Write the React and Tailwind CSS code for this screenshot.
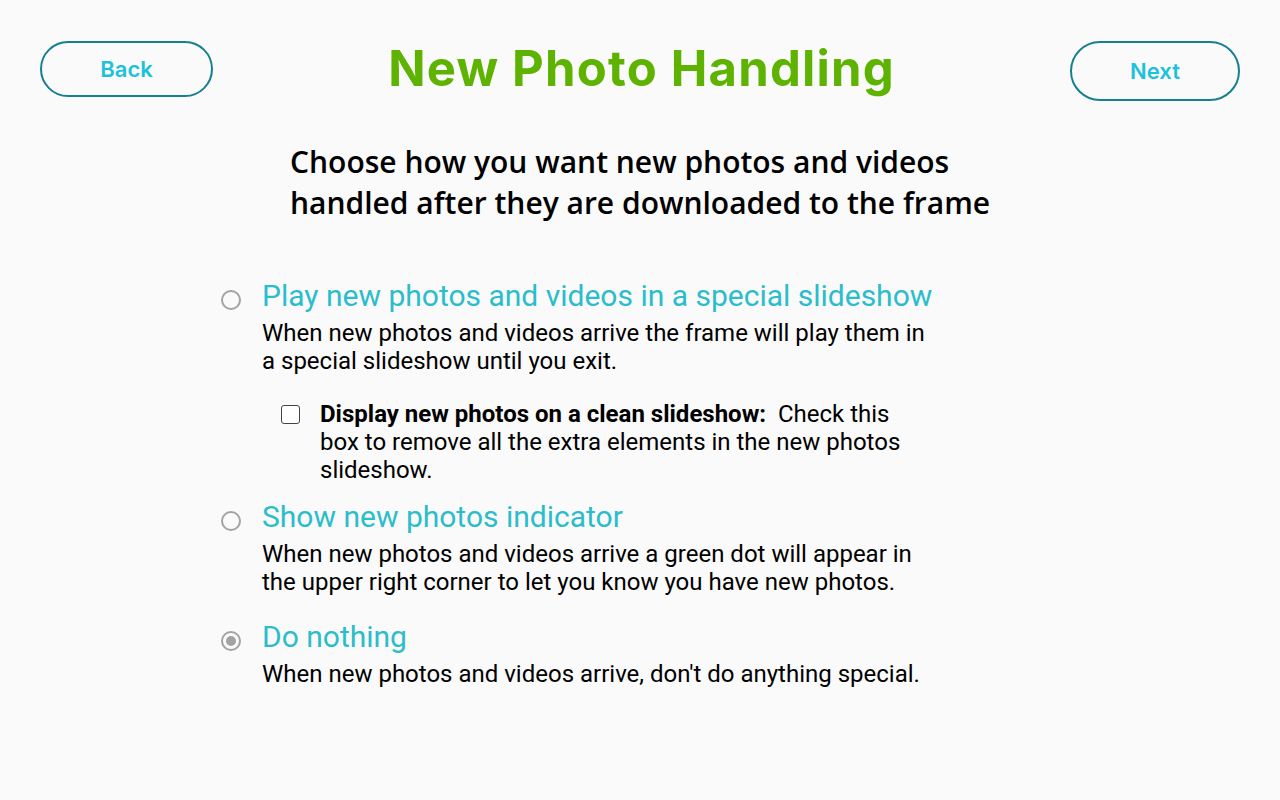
import { useState } from 'react';

const options = [
  {
    id: 'slideshow',
    title: 'Play new photos and videos in a special slideshow',
    text: 'When new photos and videos arrive the frame will play them in a special slideshow until you exit.',
  },
  {
    id: 'indicator',
    title: 'Show new photos indicator',
    text: 'When new photos and videos arrive a green dot will appear in the upper right corner to let you know you have new photos.',
  },
  {
    id: 'nothing',
    title: 'Do nothing',
    text: "When new photos and videos arrive, don't do anything special.",
  },
];

function Radio({ checked }) {
  return (
    <span className="mt-[14px] flex h-[20px] w-[20px] shrink-0 items-center justify-center rounded-full border-2 border-[#a3a3a3]">
      {checked && <span className="h-[10px] w-[10px] rounded-full bg-[#a3a3a3]" />}
    </span>
  );
}

export default function App() {
  const [selected, setSelected] = useState('nothing');
  const [clean, setClean] = useState(false);

  return (
    <div className="min-h-screen bg-[#fafafa] font-['Roboto',sans-serif] text-black">
      {/* Header */}
      <div className="flex items-start justify-between px-[40px] pt-[41px]">
        <button className="h-[56px] w-[173px] rounded-full border-2 border-[#17808f] font-['Inter',sans-serif] text-[22px] font-semibold text-[#1dc2da]">
          Back
        </button>
        <h1 className="mt-[-2px] font-['Inter',sans-serif] text-[49px] font-bold leading-[60px] tracking-[1.2px] text-[#5db300]">
          New Photo Handling
        </h1>
        <button className="h-[60px] w-[170px] rounded-full border-2 border-[#17808f] font-['Inter',sans-serif] text-[22px] font-semibold text-[#1dc2da]">
          Next
        </button>
      </div>

      <p className="ml-[290px] mt-[40px] w-[740px] font-['Open_Sans',sans-serif] text-[30px] font-semibold leading-[41px]">
        Choose how you want new photos and videos handled after they are downloaded to the frame
      </p>

      <div className="ml-[221px] mt-[53px] flex flex-col">
        {options.map((o, i) => (
          <div key={o.id} className={i === 0 ? '' : i === 1 ? 'mt-[13px]' : 'mt-[21px]'}>
            <label className="flex cursor-pointer gap-[21px]" onClick={() => setSelected(o.id)}>
              <Radio checked={selected === o.id} />
              <div className="w-[672px]">
                <div className="text-[30px] leading-[40px] text-[#2bbdcb]">{o.title}</div>
                <div className="mt-[3px] text-[24px] leading-[28px]">{o.text}</div>
              </div>
            </label>
            {o.id === 'slideshow' && (
              <label className="ml-[60px] mt-[25px] flex cursor-pointer gap-[20px]">
                <span
                  onClick={() => setClean(!clean)}
                  className="mt-[5px] flex h-[19px] w-[19px] shrink-0 items-center justify-center rounded-[3px] border border-[#444] bg-white"
                >
                  {clean && <span className="text-[14px] leading-none">✓</span>}
                </span>
                <span className="w-[600px] text-[24px] leading-[28px]">
                  <b className="font-bold">Display new photos on a clean slideshow:</b>&nbsp; Check this box to remove all the extra elements in the new photos slideshow.
                </span>
              </label>
            )}
          </div>
        ))}
      </div>
    </div>
  );
}
